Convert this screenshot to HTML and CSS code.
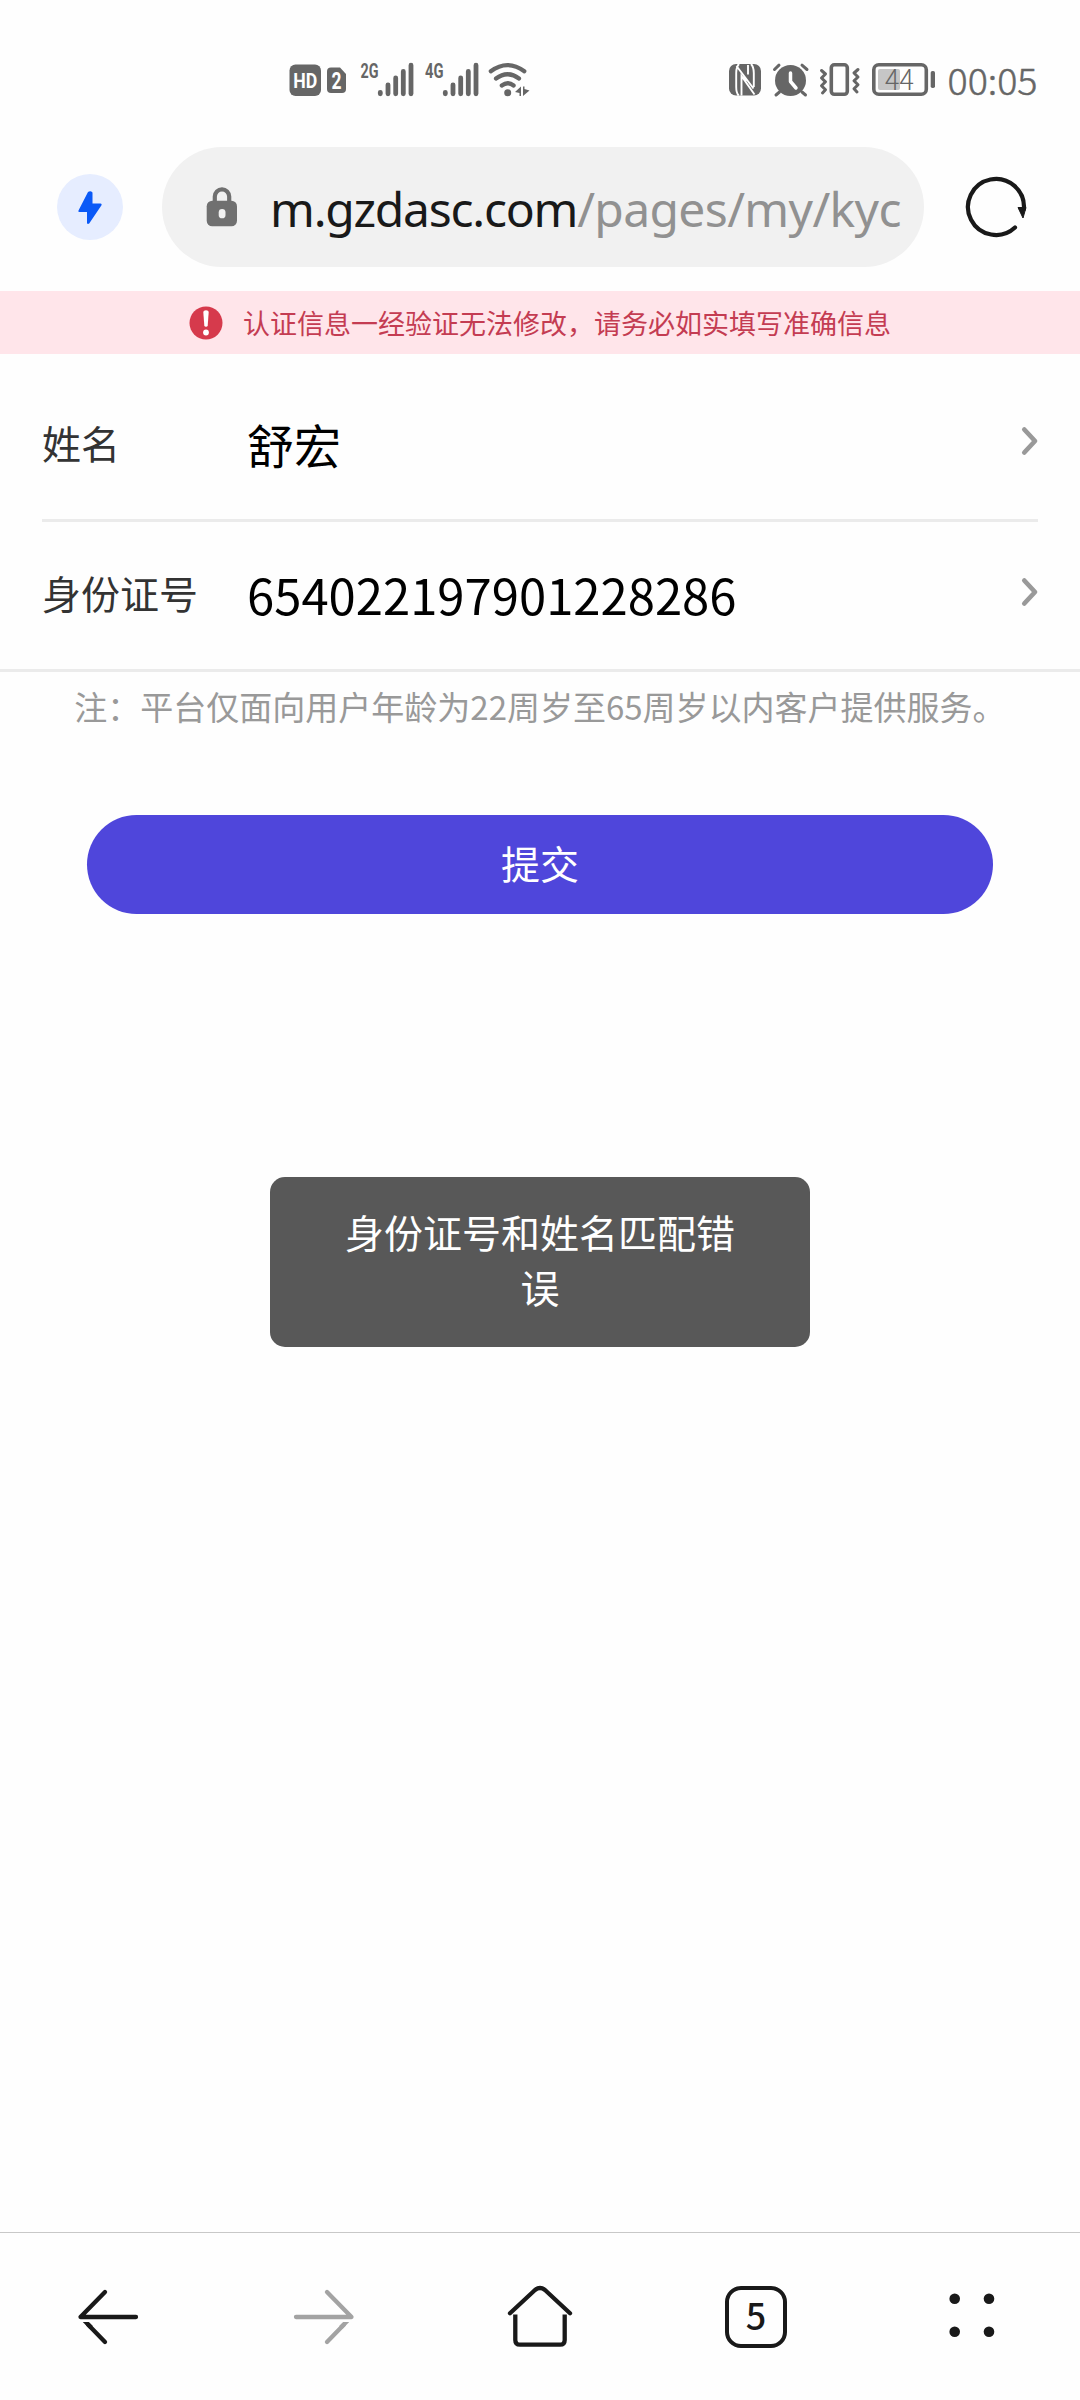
FILE: index.html
```
<!DOCTYPE html>
<html lang="zh-CN">
<head>
<meta charset="utf-8">
<title>实名认证</title>
<link rel="stylesheet" href="styles.css">
</head>
<body>
<div class="screen">
  <header class="status">
    <div class="status-left">
      <svg width="57" height="34" viewBox="289 63 57 34">
        <rect x="289.5" y="64.5" width="31.5" height="31.5" rx="6" fill="#666"/>
        <text class="ic-bold" x="293.3" y="87.5" font-size="19.5" textLength="24" lengthAdjust="spacingAndGlyphs" fill="#fff">HD</text>
        <path d="M331 67.5h9l6 6.5v15a4 4 0 0 1-4 4h-11a4 4 0 0 1-4-4v-17.500a4 4 0 0 1 4-4z" fill="#666"/>
        <text class="ic-bold" x="331.5" y="88.500" font-size="23" textLength="10" lengthAdjust="spacingAndGlyphs" fill="#fff">2</text>
      </svg>
      <svg class="sig1" width="54" height="34" viewBox="360 63 54 34">
        <text class="ic-bold" x="360.500" y="78" font-size="20.500" textLength="18" lengthAdjust="spacingAndGlyphs" fill="#666">2G</text>
        <g stroke="#666" stroke-width="4.800" stroke-linecap="round"><path d="M380.300 92.300v1.500M388 84.800v9M395.700 78v15.800M403.300 71.500v22.300M411 65.200v28.600"/></g>
      </svg>
      <svg class="sig2" width="54" height="34" viewBox="425 63 54 34">
        <text class="ic-bold" x="425" y="78" font-size="20.500" textLength="18.500" lengthAdjust="spacingAndGlyphs" fill="#666">4G</text>
        <g stroke="#666" stroke-width="4.800" stroke-linecap="round"><path d="M445.300 92.300v1.500M453 84.800v9M460.700 78v15.800M468.300 71.500v22.300M476 65.200v28.600"/></g>
      </svg>
      <svg class="wifi" width="42" height="34" viewBox="488 63 42 34">
        <g fill="none" stroke="#666" stroke-width="4.200" stroke-linecap="round"><path d="M490.800 71.200q16.500-12.300 33.500 0M496 78.500q11.500-8.500 23 0M501.800 85.500q6-4.500 11.800 0"/></g>
        <circle cx="507.700" cy="92.700" r="3.500" fill="#666"/>
        <path d="M515 92l6-5.500v9.500h-1.500v-3zM523 86.500h1.500v2.500l5 1.500-6.500 5.500z" fill="#666"/>
      </svg>
    </div>
    <div class="status-right">
      <svg width="32" height="34" viewBox="729 63 32 34">
        <rect x="729" y="64" width="32" height="31.500" rx="7" fill="#666"/>
        <path d="M739 64q-2.800 3-2.800 9v14q0 6 2.500 8.500M736.500 66l17 22.500M741.500 95.500V76l13 18.500M741.500 76.500l6.500 4.500M748 65v9.500M751 64q2.800 3 2.800 9v14" fill="none" stroke="#fff" stroke-width="1.900"/>
      </svg>
      <svg class="alarm" width="36" height="34" viewBox="773 63 36 34">
        <circle cx="790.500" cy="80.500" r="15.500" fill="#666"/>
        <path d="M774.500 69.500l4.500-4.300M802 65.200l5 4.300M779.500 92l-3.500 3M802 92l3.500 3" stroke="#666" stroke-width="3" stroke-linecap="round"/>
        <path d="M790.500 73v8.500l5.500 6.500" fill="none" stroke="#fff" stroke-width="3.500" stroke-linecap="round" stroke-linejoin="round"/>
      </svg>
      <svg width="41" height="34" viewBox="819 63 41 34">
        <rect x="831.300" y="64.800" width="16" height="29.500" rx="3" fill="none" stroke="#666" stroke-width="3.600"/>
        <path d="M821.500 70.500l4 3.500-4 4 4 3.800-4 4 4 4-3 3.200M858 69.500l-4 3.500 4 4-4 3.800 4 4-4 4 3 3.200" fill="none" stroke="#666" stroke-width="3" stroke-linejoin="round" stroke-linecap="round"/>
      </svg>
      <svg width="64" height="34" viewBox="872 63 64 34">
        <rect x="873.800" y="64.800" width="52.500" height="29.500" rx="5" fill="none" stroke="#666" stroke-width="3.600"/>
        <rect x="878" y="69" width="22" height="21" rx="2" fill="#c6c6c6"/>
        <rect x="930.700" y="71" width="4.300" height="17" rx="1.800" fill="#666"/>
        <text class="ic-num" x="885" y="89.500" font-size="28" textLength="29" lengthAdjust="spacingAndGlyphs" fill="#666">44</text>
      </svg>
      <svg width="90" height="34" viewBox="948 66 90 34"><text class="ic-num" x="947.500" y="98" font-size="36" textLength="90" lengthAdjust="spacingAndGlyphs" fill="#666" stroke="#666" stroke-width=".5">00:05</text></svg>
    </div>
  </header>

  <div class="toolbar">
    <div class="boost">
      <svg width="26" height="35" viewBox="77 189 26 35"><path d="M88 191l-9.500 18.500q-.7 1.500 1 1.500H87v11q.5 1.600 2.200.5L101.500 204.300q.7-1.700-1-1.800H92.500V191.500q-2-2.200-4.500-.5z" fill="#0a59f7"/></svg>
    </div>
    <div class="address">
      <svg width="32" height="40" viewBox="206 188 32 40"><path d="M214.800 204v-6.500a7.200 7.200 0 0 1 14.400 0V204" fill="none" stroke="#707070" stroke-width="4.200"/><rect x="206.700" y="201.700" width="30.300" height="25.600" rx="5.500" fill="#707070"/><rect x="218.700" y="210" width="6.800" height="9.300" rx="3.400" fill="#f1f1f1"/></svg>
      <div class="url">m.gzdasc.com<span class="path">/pages/my/kyc</span></div>
    </div>
    <svg width="64" height="64" viewBox="964 175 64 64"><path d="M1015 227.500A28 28 0 1 1 1023.900 209" fill="none" stroke="#191919" stroke-width="4.200" stroke-linecap="round"/><path d="M1018 207.500h8l-3 10.500z" fill="#191919" stroke="#191919" stroke-width="1" stroke-linejoin="round"/></svg>
  </div>

  <main class="page">
    <div class="notice">
      <svg width="34" height="34" viewBox="0 0 34 34"><circle cx="17" cy="17" r="16.500" fill="#d63a4c"/><path d="M14.300 6q0-1.800 2.700-1.800T19.700 6l-1 13.500q-.2 1.300-1.700 1.300t-1.700-1.300z" fill="#fff"/><circle cx="17" cy="26.500" r="2.900" fill="#fff"/></svg>
      <span>认证信息一经验证无法修改，请务必如实填写准确信息</span>
    </div>
    <div class="row row-name">
      <span class="label">姓名</span><span class="value">舒宏</span>
      <svg class="chevron" width="17" height="30" viewBox="0 0 17 30"><path d="M3.300 3.500L14 15 3.300 26.500" fill="none" stroke="#999" stroke-width="4.700" stroke-linecap="round" stroke-linejoin="round"/></svg>
    </div>
    <div class="row row-id">
      <span class="label">身份证号</span><span class="value number">654022197901228286</span>
      <svg class="chevron" width="17" height="30" viewBox="0 0 17 30"><path d="M3.300 3.500L14 15 3.300 26.500" fill="none" stroke="#999" stroke-width="4.700" stroke-linecap="round" stroke-linejoin="round"/></svg>
    </div>
    <p class="note">注：平台仅面向用户年龄为22周岁至65周岁以内客户提供服务。</p>
    <button class="submit">提交</button>
  </main>

  <nav class="nav">
    <svg width="64" height="66" viewBox="76 2284 64 66"><g fill="none" stroke="#191919" stroke-width="4.300" stroke-linecap="round" stroke-linejoin="round"><path d="M136 2317H80.500L105 2292"/><path d="M105 2342L88 2324.500"/></g><path d="M82.800 2322h6l4 4-3.200 3z" fill="#191919"/></svg>
    <svg width="64" height="66" viewBox="292 2284 64 66"><g fill="none" stroke="#a3a3a3" stroke-width="4.300" stroke-linecap="round" stroke-linejoin="round"><path d="M296 2317h55.500L327 2292"/><path d="M327 2342l17-17.500"/></g><path d="M349.200 2322h-6l-4 4 3.200 3z" fill="#a3a3a3"/></svg>
    <svg width="66" height="66" viewBox="507 2284 66 66"><g fill="none" stroke="#191919" stroke-width="4.300" stroke-linejoin="round"><path stroke-linecap="round" d="M510 2313.300L535 2290q5-4 10 0l25 23.300"/><path d="M515.300 2314.500v25.500q0 4.700 4.700 4.700h40q4.700 0 4.700-4.700v-25.500"/></g></svg>
    <div class="tabs">5</div>
    <svg class="more" width="46" height="44" viewBox="949 2293 46 44" fill="#191919"><circle cx="954.700" cy="2298.700" r="5.300"/><circle cx="989" cy="2298.700" r="5.300"/><circle cx="954.700" cy="2331.700" r="5.300"/><circle cx="989" cy="2331.700" r="5.300"/></svg>
  </nav>
  <div class="toast">身份证号和姓名匹配错误</div>
</div>
</body>
</html>
```
FILE: styles.css
```
* { box-sizing: border-box; }
body { margin: 0; background: #fefefe; font-family: "Noto Sans CJK SC", sans-serif; }
svg { display: block; flex: none; overflow: visible; }
.screen { position: relative; width: 1080px; height: 2400px; display: flex; flex-direction: column; overflow: hidden; }

.status { height: 147px; padding: 63px 42px 0 289px; display: flex; justify-content: space-between; align-items: flex-start; }
.status-left, .status-right { display: flex; }
.sig1 { margin-left: 14px; }
.sig2 { margin-left: 11px; }
.wifi { margin-left: 9px; }
.status-right { gap: 12px; }
.alarm { margin-right: -2px; }
.ic-bold { font-family: "Roboto", sans-serif; font-weight: 700; }
.ic-num { font-family: "Noto Sans CJK SC", sans-serif; font-weight: 300; }

.toolbar { height: 144px; padding: 0 52px 24px 57px; display: flex; align-items: center; }
.boost { width: 66px; height: 66px; border-radius: 50%; background: #e6edff; display: flex; align-items: center; justify-content: center; }
.address { width: 762px; height: 120px; margin: 0 40px 0 39px; border-radius: 60px; background: #f1f1f1; padding-left: 44px; display: flex; align-items: center; gap: 32px; }
.url { padding-top: 3px; font-family: "Noto Sans", sans-serif; font-size: 48px; line-height: 66px; letter-spacing: -1.25px; color: #191919; white-space: nowrap; }
.path { color: #919191; letter-spacing: -.65px; }

.page { flex: 1; }
.notice { height: 63px; background: #ffe5ea; color: #c43c52; font-size: 27px; display: flex; align-items: center; justify-content: center; gap: 20px; }
.row { display: flex; align-items: center; }
.row-name { height: 168px; margin: 0 42px; padding-top: 14px; border-bottom: 3px solid #ebebeb; }
.row-id { height: 150px; padding: 0 42px; border-bottom: 3px solid #ebebeb; }
.label { width: 205px; padding-bottom: 4px; font-size: 39px; color: #333; }
.value { flex: 1; font-size: 47px; color: #000; }
.chevron { margin-bottom: 5px; }
.row-id .label { padding-bottom: 7px; }
.row-id .chevron { margin-bottom: 8px; }
.value.number { padding-bottom: 5px; font-size: 49px; }
.note { margin: 0; height: 143px; padding-top: 10px; line-height: 48px; font-size: 33px; color: #999; text-align: center; white-space: nowrap; }
.submit { display: block; width: 906px; height: 99px; margin: 0 auto; padding: 0 0 5px; border: 0; border-radius: 50px; background: #4f46db; color: #fff; font: 39px/94px "Noto Sans CJK SC", sans-serif; }

.nav { height: 168px; border-top: 1px solid #c8c8c8; display: grid; grid-template-columns: repeat(5, 1fr); justify-items: center; align-items: center; }
.tabs { width: 62px; height: 62px; border: 4px solid #191919; border-radius: 16px; font-size: 36px; font-weight: 500; line-height: 49px; text-align: center; color: #191919; }
.more { margin-bottom: 3px; }
.toast { position: absolute; left: 270px; top: 1177px; width: 540px; height: 170px; padding: 27px 70px; border-radius: 15px; background: #585858; color: #fff; font-size: 39px; line-height: 55px; text-align: center; }
```
